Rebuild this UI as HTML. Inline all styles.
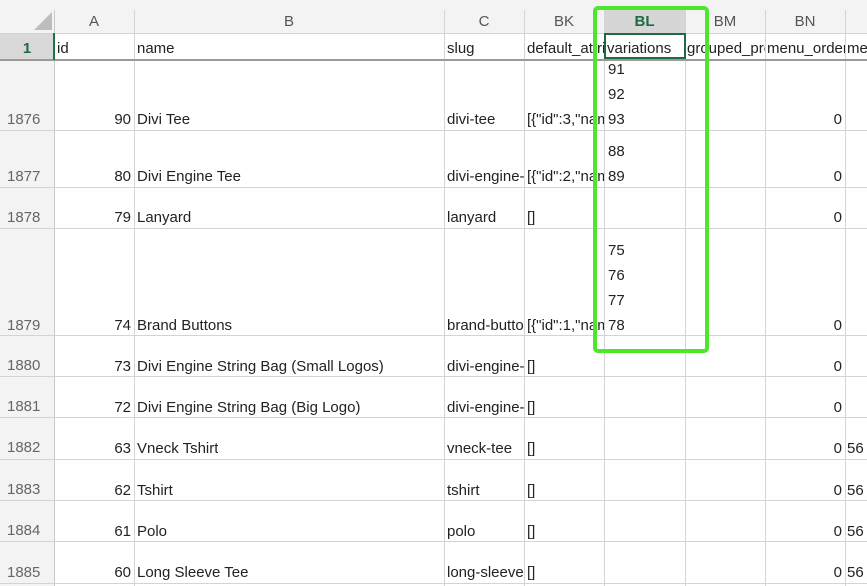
<!DOCTYPE html><html><head><style>
body{margin:0;width:867px;height:586px;overflow:hidden;background:#fff;font-family:"Liberation Sans",sans-serif;font-size:15px;color:#222;position:relative}
div{position:absolute;box-sizing:border-box}
.t{height:18px;line-height:18px;white-space:nowrap;overflow:hidden;margin-top:2px}
.h{color:#555;text-align:center;font-size:15px;margin-top:1px}
.rh{color:#666;left:0;width:50px;padding-left:7px}
.vl{width:1px;background:#d4d4d4}
.hl{height:1px;background:#d4d4d4;left:0;width:867px}
</style></head><body>
<div style="left:0;top:0;width:867px;height:33px;background:#f3f3f3"></div>
<div style="left:0;top:0;width:54px;height:586px;background:#f3f3f3"></div>
<div style="left:0;top:33px;width:54px;height:27px;background:#d9d9d9"></div>
<div style="left:604px;top:10px;width:81px;height:23px;background:#d6d6d6"></div>
<svg style="position:absolute;left:34px;top:12px" width="18" height="18"><polygon points="18,0 18,18 0,18" fill="#bdbdbd"/></svg>
<div class="vl" style="left:54px;top:10px;height:576px;background:#c8c8c8"></div>
<div class="vl" style="left:134px;top:10px;height:576px"></div>
<div class="vl" style="left:444px;top:10px;height:576px"></div>
<div class="vl" style="left:524px;top:10px;height:576px"></div>
<div class="vl" style="left:604px;top:10px;height:576px"></div>
<div class="vl" style="left:685px;top:10px;height:576px"></div>
<div class="vl" style="left:765px;top:10px;height:576px"></div>
<div class="vl" style="left:845px;top:10px;height:576px"></div>
<div class="hl" style="top:33px"></div>
<div class="hl" style="top:59px;height:2px;background:#9a9a9a"></div>
<div class="hl" style="top:130px"></div><div class="hl" style="top:187px"></div><div class="hl" style="top:228px"></div><div class="hl" style="top:335px"></div><div class="hl" style="top:376px"></div><div class="hl" style="top:417px"></div><div class="hl" style="top:459px"></div><div class="hl" style="top:500px"></div><div class="hl" style="top:541px"></div><div class="hl" style="top:583px"></div>
<div style="left:53px;top:33px;width:2px;height:27px;background:#217346"></div>
<div style="left:604px;top:33px;width:82px;height:26px;border:2px solid #1e6b41"></div>
<div class="t h" style="left:54px;width:80px;top:12px">A</div>
<div class="t h" style="left:134px;width:310px;top:12px">B</div>
<div class="t h" style="left:444px;width:80px;top:12px">C</div>
<div class="t h" style="left:524px;width:80px;top:12px">BK</div>
<div class="t h" style="left:604px;width:81px;top:12px;color:#1e6b41;font-weight:bold">BL</div>
<div class="t h" style="left:685px;width:80px;top:12px">BM</div>
<div class="t h" style="left:765px;width:80px;top:12px">BN</div>
<div class="t" style="left:0;width:54px;top:38px;text-align:center;color:#1e6b41;font-weight:bold">1</div>
<div class="t" style="left:57px;top:38px">id</div>
<div class="t" style="left:137px;top:38px">name</div>
<div class="t" style="left:447px;top:38px">slug</div>
<div class="t" style="left:527px;top:38px;width:77px">default_attributes</div>
<div class="t" style="left:607px;top:38px;width:77px">variations</div>
<div class="t" style="left:687px;top:38px;width:78px">grouped_products</div>
<div class="t" style="left:767px;top:38px;width:78px">menu_order</div>
<div class="t" style="left:847px;top:38px;width:20px">meta</div>
<div class="t rh" style="top:109px">1876</div><div class="t" style="left:54px;width:77px;text-align:right;top:109px">90</div><div class="t" style="left:137px;top:109px">Divi Tee</div><div class="t" style="left:447px;top:109px;width:77px">divi-tee</div><div class="t" style="left:527px;top:109px;width:77px">[{"id":3,"name</div><div class="t" style="left:765px;width:77px;text-align:right;top:109px">0</div>
<div class="t rh" style="top:166px">1877</div><div class="t" style="left:54px;width:77px;text-align:right;top:166px">80</div><div class="t" style="left:137px;top:166px">Divi Engine Tee</div><div class="t" style="left:447px;top:166px;width:77px">divi-engine-tee</div><div class="t" style="left:527px;top:166px;width:77px">[{"id":2,"name</div><div class="t" style="left:765px;width:77px;text-align:right;top:166px">0</div>
<div class="t rh" style="top:207px">1878</div><div class="t" style="left:54px;width:77px;text-align:right;top:207px">79</div><div class="t" style="left:137px;top:207px">Lanyard</div><div class="t" style="left:447px;top:207px;width:77px">lanyard</div><div class="t" style="left:527px;top:207px">[]</div><div class="t" style="left:765px;width:77px;text-align:right;top:207px">0</div>
<div class="t rh" style="top:315px">1879</div><div class="t" style="left:54px;width:77px;text-align:right;top:315px">74</div><div class="t" style="left:137px;top:315px">Brand Buttons</div><div class="t" style="left:447px;top:315px;width:77px">brand-buttons</div><div class="t" style="left:527px;top:315px;width:77px">[{"id":1,"name</div><div class="t" style="left:765px;width:77px;text-align:right;top:315px">0</div>
<div class="t rh" style="top:355px">1880</div><div class="t" style="left:54px;width:77px;text-align:right;top:356px">73</div><div class="t" style="left:137px;top:356px">Divi Engine String Bag (Small Logos)</div><div class="t" style="left:447px;top:356px;width:77px">divi-engine-bag</div><div class="t" style="left:527px;top:356px">[]</div><div class="t" style="left:765px;width:77px;text-align:right;top:356px">0</div>
<div class="t rh" style="top:396px">1881</div><div class="t" style="left:54px;width:77px;text-align:right;top:397px">72</div><div class="t" style="left:137px;top:397px">Divi Engine String Bag (Big Logo)</div><div class="t" style="left:447px;top:397px;width:77px">divi-engine-bag</div><div class="t" style="left:527px;top:397px">[]</div><div class="t" style="left:765px;width:77px;text-align:right;top:397px">0</div>
<div class="t rh" style="top:437px">1882</div><div class="t" style="left:54px;width:77px;text-align:right;top:438px">63</div><div class="t" style="left:137px;top:438px">Vneck Tshirt</div><div class="t" style="left:447px;top:438px;width:77px">vneck-tee</div><div class="t" style="left:527px;top:438px">[]</div><div class="t" style="left:765px;width:77px;text-align:right;top:438px">0</div><div class="t" style="left:847px;top:438px">56</div>
<div class="t rh" style="top:479px">1883</div><div class="t" style="left:54px;width:77px;text-align:right;top:480px">62</div><div class="t" style="left:137px;top:480px">Tshirt</div><div class="t" style="left:447px;top:480px">tshirt</div><div class="t" style="left:527px;top:480px">[]</div><div class="t" style="left:765px;width:77px;text-align:right;top:480px">0</div><div class="t" style="left:847px;top:480px">56</div>
<div class="t rh" style="top:520px">1884</div><div class="t" style="left:54px;width:77px;text-align:right;top:521px">61</div><div class="t" style="left:137px;top:521px">Polo</div><div class="t" style="left:447px;top:521px">polo</div><div class="t" style="left:527px;top:521px">[]</div><div class="t" style="left:765px;width:77px;text-align:right;top:521px">0</div><div class="t" style="left:847px;top:521px">56</div>
<div class="t rh" style="top:562px">1885</div><div class="t" style="left:54px;width:77px;text-align:right;top:562px">60</div><div class="t" style="left:137px;top:562px">Long Sleeve Tee</div><div class="t" style="left:447px;top:562px;width:77px">long-sleeve-tee</div><div class="t" style="left:527px;top:562px">[]</div><div class="t" style="left:765px;width:77px;text-align:right;top:562px">0</div><div class="t" style="left:847px;top:562px">56</div>
<div class="t" style="left:608px;top:59px">91</div><div class="t" style="left:608px;top:84px">92</div><div class="t" style="left:608px;top:109px">93</div><div class="t" style="left:608px;top:141px">88</div><div class="t" style="left:608px;top:166px">89</div><div class="t" style="left:608px;top:240px">75</div><div class="t" style="left:608px;top:265px">76</div><div class="t" style="left:608px;top:290px">77</div><div class="t" style="left:608px;top:315px">78</div>
<div style="left:593px;top:6px;width:116px;height:347px;border:4px solid #4ce62a;border-radius:5px"></div>
</body></html>
